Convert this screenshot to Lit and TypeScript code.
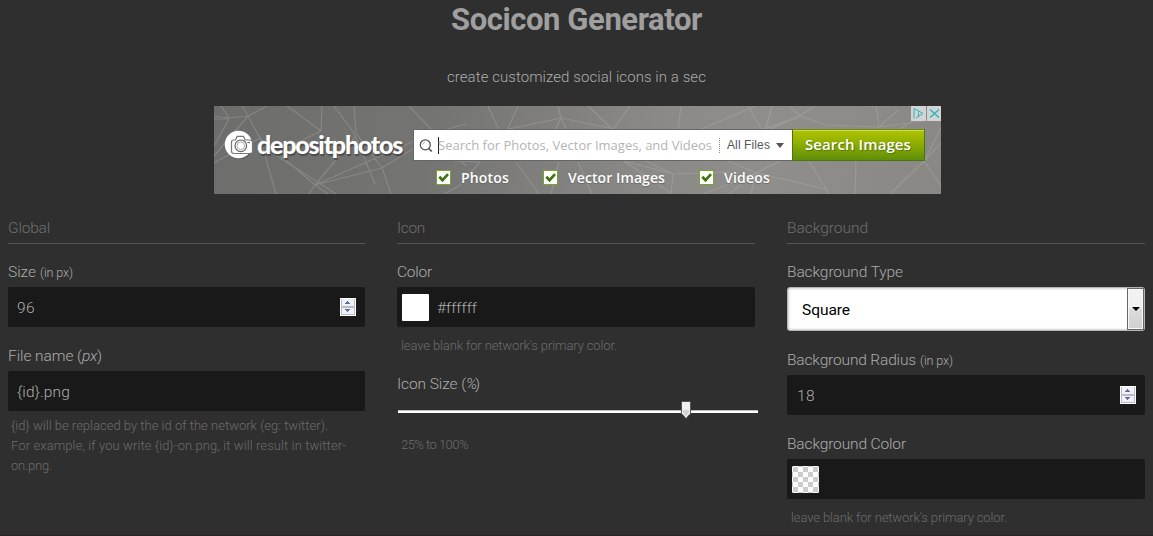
import { LitElement, html, css } from "lit";
import { customElement, property } from "lit/decorators.js";

/** A single line of text whose tracking is adjusted to a given measure. */
@customElement("fit-text")
class FitText extends LitElement {
  @property({ type: Number }) w = 0;
  @property() text = "";
  static styles = css`
    :host { display: inline-block; white-space: pre; }
    .box { display: inline-block; white-space: pre; }
  `;
  firstUpdated() {
    const box = this.renderRoot.querySelector(".box") as HTMLElement;
    const fit = () => {
      box.style.letterSpacing = "0px";
      const natural = box.getBoundingClientRect().width;
      box.style.letterSpacing = (this.w - natural) / this.text.length + "px";
    };
    fit();
    document.fonts.ready.then(fit);
  }
  render() {
    return html`<span class="box">${this.text}</span>`;
  }
}

const t = (text: string, w: number) => html`<fit-text .text=${text} .w=${w}></fit-text>`;

@customElement("number-spinner")
class NumberSpinner extends LitElement {
  static styles = css`:host { display: block; width: 16px; height: 18px; } svg { display: block; }`;
  render() {
    return html`<svg width="16" height="18" viewBox="0 0 16 18">
      <rect width="16" height="18" fill="#fff"/>
      <rect x="1" y="1" width="14" height="16" fill="#b9bcc4"/>
      <rect x="2" y="1" width="12" height="7" fill="#f0f1f6"/>
      <rect x="2" y="10" width="12" height="6" fill="#f0f1f6"/>
      <path d="M7 3h1v1h1v1h1v1H5V5h1V4h1z" fill="#5f6b9c"/>
      <path d="M5 11h5v1H9v1H8v1H7v-1H6v-1H5z" fill="#5f6b9c"/>
    </svg>`;
  }
}

@customElement("ad-banner")
class AdBanner extends LitElement {
  static styles = css`
    :host { display: block; position: relative; width: 727px; height: 88px; overflow: hidden;
      font-family: "Open Sans", sans-serif;
      background: linear-gradient(100deg, #6d6d6c 0%, #747473 30%, #8a8986 60%, #908e8a 75%, #898885 100%); }
    .mesh { position: absolute; left: 0; top: 0; }
    .content { position: relative; display: flex; padding: 23px 0 0 10px; }
    .camera { display: block; margin: 1px 3px 0 0; }
    .name { width: 156px; height: 32px; font: 900 25px/30px Lato, sans-serif; color: #fff;
      text-shadow: 1px 2px 1px #4b4b4b; }
    .search { display: flex; width: 378px; height: 30px; margin-top: 1px; margin-left: 1px; background: #fff; box-shadow: 0 0 0 1px #666; align-items: center; }
    .glass { margin-left: 5px; }
    .caret { width: 1px; height: 17px; margin-left: 5px; background: #222; }
    .hint { font-size: 13px; color: #b4b4b4; width: 281px; line-height: 28px; margin-left: -1px; }
    .hint, .files { font-weight: 400; }
    .divider { height: 15px; border-left: 1px dotted #888; }
    .files { margin-left: 7px; font: 12px/28px "Liberation Sans", sans-serif; color: #555; }
    .down { margin-left: 6px; border: 4px solid transparent; border-top: 5px solid #555; border-bottom: 0; }
    .go { box-sizing: border-box; width: 133px; height: 32px; border: 1px solid #4d7414; border-top-color: #6b8b17;
      background: linear-gradient(#b0c400, #8fae00 45%, #5f8f0a); box-shadow: inset 0 1px #cbd957;
      color: #fff; font-weight: 600; font-size: 15px; line-height: 29px; padding-left: 12px; text-shadow: 1px 1px 1px #55750a; }
    .checks { position: relative; display: flex; padding: 9px 0 0 222px; color: #fff; font-size: 14px; font-weight: 600; line-height: 16px; text-shadow: 0 1px 1px #666; }
    .check { display: flex; gap: 10px; align-items: flex-start; }
    .photos { width: 107px; }
    .vectors { width: 156px; }
    .corner { position: absolute; right: -1px; top: 0; }
    svg { flex: none; display: block; }
  `;
  check(label: string, w: number, cls: string) {
    return html`<div class="check ${cls}">
      <svg width="15" height="15" viewBox="0 0 15 15"><rect x=".5" y=".5" width="14" height="14" fill="#fff" stroke="#78a52c"/><path d="M3.3 6.8 6.5 10.2 12 4.2" fill="none" stroke="#3f7414" stroke-width="2.7"/></svg>
      ${t(label, w)}</div>`;
  }
  render() {
    return html`
      <svg class="mesh" width="727" height="88" viewBox="0 0 727 88" fill="none" stroke="#c0bfbb" stroke-opacity=".27" stroke-width="1.2">
        <path d="M0 10 15 12 34 10 53 0M0 13h15L0 40M15 12 7 0M34 10 28 0M34 10 0 50M34 10 46 32 62 88M46 32 101 79 114 88M46 32 0 57M73 0 107 25 60 48 122 88M107 25 108 0M120 0 140 27 161 78M140 0 142 27 168 62 230 24 252 18M168 62 101 79 95 88M101 79 141 31M101 79 200 35M168 62 177 88M195 0 252 60M245 80 230 88M274 0 290 35M304 0 285 42M285 25 347 12 400 23M347 12 344 0M347 12 338 30M347 12 355 30M374 0 399 24 416 0M467 0 464 25M240 55 266 56 245 80M302 56 325 88M345 56 337 88M364 56 378 88M410 55 459 68 515 66M410 55 458 88M459 68 457 88M430 54 459 68M485 24 542 0M534 0 548 24M558 0 551 25M548 24 586 10 600 0M586 10 575 0M586 10 612 19 665 21 727 12M586 10 545 28M665 21 662 0 655 0M665 21 684 4M720 0 685 24M542 67 490 88M542 67 515 88M542 67 537 88M542 67 612 83M542 67 570 53M542 67 503 50M592 50 615 88M642 50 641 88M727 37 710 55 676 88M710 55 727 80M727 22 710 55 705 24"/>
      </svg>
      <div class="content">
        <svg class="camera" width="30" height="29" viewBox="0 0 30 29">
          <circle cx="15.5" cy="16" r="13.5" fill="#505050" opacity=".5"/>
          <circle cx="14.5" cy="14.5" r="13.7" fill="#fff"/>
          <g transform="translate(0 1)"><path d="M7.5 11q0-2 2-2h2l1.5-3.6h6.5L21 9h5q2.5 0 2.5 2.5V20q0 2.5-2.5 2.5H10q-2.5 0-2.5-2.5z" fill="#fff" stroke="#777" stroke-width="1.2"/>
          <circle cx="16.8" cy="14.8" r="5.8" fill="#fff" stroke="#666" stroke-width="1.2"/><circle cx="16.8" cy="14.8" r="3.9" fill="#fff" stroke="#999" stroke-width=".8"/>
          <rect x="23.4" y="10.9" width="2.6" height="1.3" fill="#777"/></g>
        </svg>
        <div class="name">${t("depositphotos", 145)}</div>
        <div class="search">
          <svg class="glass" width="14" height="15" viewBox="0 0 14 15" fill="none" stroke="#555"><circle cx="6.3" cy="6.8" r="5" stroke-width="1.3"/><path d="m9.7 10.4 3.1 3.1" stroke-width="1.6"/><path d="M3.6 6.6q.2-2.2 2.4-2.6" stroke="#aaa"/></svg>
          <span class="caret"></span>
          <span class="hint">${t("Search for Photos, Vector Images, and Videos", 274)}</span>
          <span class="divider"></span><span class="files">${t("All Files", 43)}</span><span class="down"></span>
        </div>
        <div class="go">${t("Search Images", 106)}</div>
      </div>
      <div class="checks">
        ${this.check("Photos", 48, "photos")}${this.check("Vector Images", 97, "vectors")}${this.check("Videos", 46, "")}
      </div>
      <svg class="corner" width="31" height="15" viewBox="0 0 31 15" fill="none" stroke="#2bb3c0">
        <path fill="#d3d5d5" stroke="none" d="M0 0h15v15H0zM16 0h15v15H16z"/>
        <path d="M5 12 12 7.5 3 2.5V12.5M7.5 6.5v4M7.5 4.8v1"/><path d="m19 3.5 9 8M28 3.5l-9 8" stroke-width="1.4"/>
      </svg>`;
  }
}

@customElement("app-root")
class AppRoot extends LitElement {
  static styles = css`
    :host { display: block; width: 1153px; height: 536px; overflow: hidden; box-sizing: border-box; background: #2f2f2f;
      color: #a6a6a6; font-family: Roboto, sans-serif; font-size: 15.5px; font-weight: 300; border-bottom: 1px solid #2b2128; }
    .title { margin: 0; height: 39px; text-align: center; font-size: 31px; line-height: 39px; font-weight: 700; color: #9f9f9f; }
    .sub { height: 20px; margin: 28px 0 19px; text-align: center; font-size: 15px; line-height: 20px; color: #adadad; }
    ad-banner { margin-left: 214px; }
    .cols { display: grid; grid-template-columns: 357px 358px 358px; column-gap: 32px; padding: 23px 8px 0; }
    .heading { height: 26px; line-height: 22px; border-bottom: 1px solid #555; color: #6e6e6e; margin-bottom: 18px; }
    .label { display: flex; align-items: baseline; gap: 4px; height: 25px; line-height: 20px; color: #acacac; }
    .tight { gap: 0; }
    .small { font-size: 12.5px; }
    em { font-style: italic; }
    .field { display: flex; align-items: center; box-sizing: border-box; height: 40px; padding: 0 9px; background: #191919; border-radius: 2px; color: #adadad; line-height: 40px; }
    .field fit-text { padding-top: 1px; }
    .push { margin-left: auto; }
    .gap { margin-bottom: 19px; }
    .radius { padding-left: 10px; }
    .pick { padding-left: 5px; gap: 8px; }
    .swatch { width: 27px; height: 27px; background: #fff; border-radius: 1px; }
    .empty { background: repeating-conic-gradient(#fff 0 25%, #ccc 0 50%) 1px 1px / 10px 10px; }
    .help { font-size: 13px; line-height: 20px; color: #6c6c6c; padding-left: 4px; }
    .filehelp { padding: 5px 0 0 3px; }
    .after { padding-top: 9px; }
    .below { padding-top: 15px; }
    .line { display: block; height: 20px; }
    .iconsize { margin-top: 18px; }
    .range { display: block; margin: 1px 0 0 1px; }
    .select { display: flex; box-sizing: border-box; height: 44px; background: #fff; border: 1px solid #b5b5b5; border-radius: 3px; box-shadow: inset 0 0 3px #aaa; color: #000; font-weight: 400; line-height: 44px; padding-left: 14px; margin-bottom: 19px; }
    .drop { margin: 0 0 0 auto; width: 17px; height: 42px; box-sizing: border-box; border: 1px solid #666; box-shadow: inset 0 0 0 1px #f8f8f8; background: linear-gradient(#f1f1f1 0 48%, #ddd 49%, #cfcfcf); display: flex; align-items: center; justify-content: center; }
    .tri { border: 4px solid transparent; border-top-color: #000; border-bottom: 0; }
  `;
  render() {
    return html`
      <h1 class="title">${t("Socicon Generator", 251)}</h1>
      <div class="sub">${t("create customized social icons in a sec", 259)}</div>
      <ad-banner></ad-banner>
      <div class="cols">
        <section>
          <div class="heading">${t("Global", 42)}</div>
          <div class="label">${t("Size", 28)}<span class="small">${t("(in px)", 33)}</span></div>
          <div class="field gap">${t("96", 18)}<number-spinner class="push"></number-spinner></div>
          <div class="label tight">${t("File name (", 74)}<em>${t("px", 15)}</em>${t(")", 5)}</div>
          <div class="field">${t("{id}.png", 53)}</div>
          <div class="help filehelp">
            <span class="line">${t("{id} will be replaced by the id of the network (eg: twitter).", 317)}</span>
            <span class="line">${t("For example, if you write {id}-on.png, it will result in twitter-", 335)}</span>
            <span class="line">${t("on.png.", 41)}</span>
          </div>
        </section>
        <section>
          <div class="heading">${t("Icon", 28)}</div>
          <div class="label">${t("Color", 35)}</div>
          <div class="field pick"><span class="swatch"></span>${t("#ffffff", 40)}</div>
          <div class="help after">${t("leave blank for network's primary color.", 216)}</div>
          <div class="label tight iconsize">${t("Icon Size (", 69)}<em>${t("%", 9)}</em>${t(")", 4)}</div>
          <svg class="range" width="360" height="20" viewBox="0 0 360 20">
            <path d="M0 10.5h360" stroke="#bdbdbd"/><path d="M0 12h360" stroke="#fff" stroke-width="2"/>
            <path d="M283.5 2.5q0-1 1-1h7q1 0 1 1v11l-4.5 5-4.5-5z" fill="#f2f2f2" stroke="#555"/>
            <path d="M285 10h6v3l-3 3.2-3-3.2z" fill="#d4d4d4"/>
          </svg>
          <div class="help below">${t("25% to 100%", 67)}</div>
        </section>
        <section>
          <div class="heading">${t("Background", 81)}</div>
          <div class="label">${t("Background Type", 116)}</div>
          <div class="select">${t("Square", 48)}<span class="drop"><span class="tri"></span></span></div>
          <div class="label">${t("Background Radius", 129)}<span class="small">${t("(in px)", 33)}</span></div>
          <div class="field gap radius">${t("18", 18)}<number-spinner class="push"></number-spinner></div>
          <div class="label">${t("Background Color", 119)}</div>
          <div class="field pick"><span class="swatch empty"></span></div>
          <div class="help after">${t("leave blank for network's primary color.", 216)}</div>
        </section>
      </div>`;
  }
}
